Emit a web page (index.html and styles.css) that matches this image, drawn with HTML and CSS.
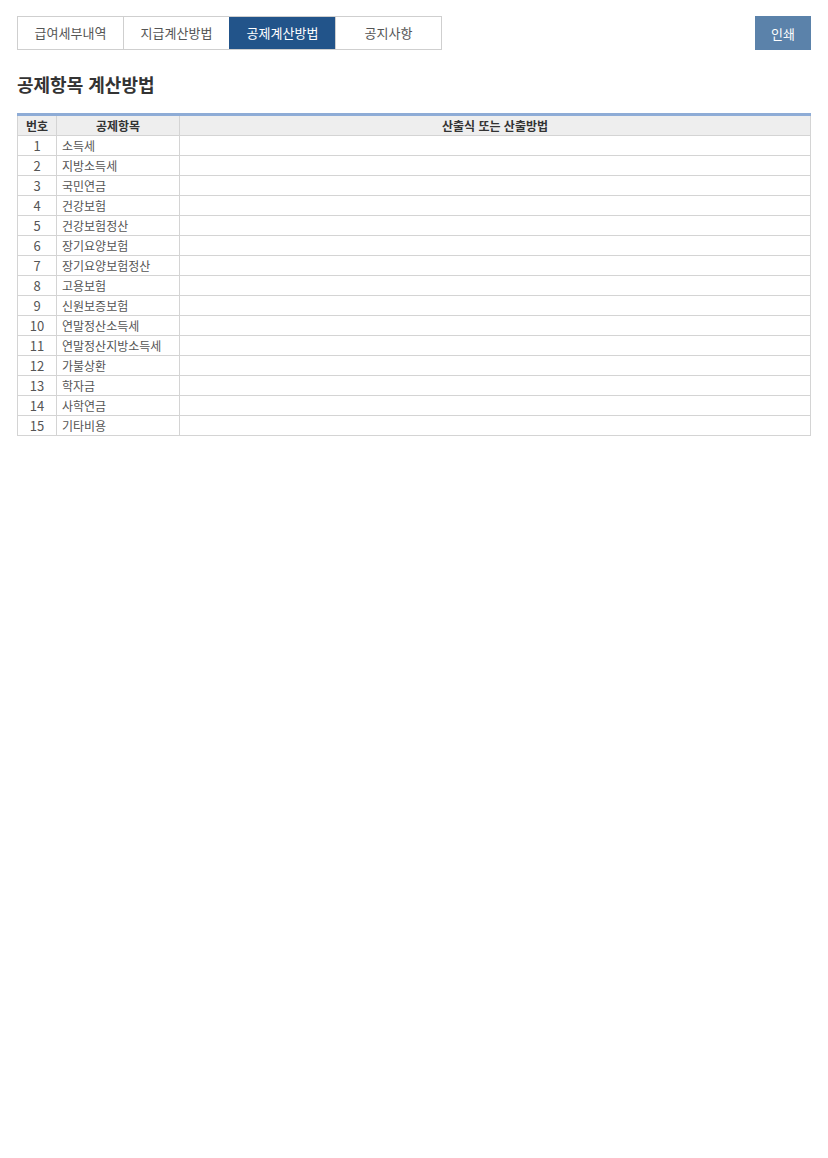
FILE: index.html
```html
<!DOCTYPE html>
<html lang="ko">
<head>
<meta charset="utf-8">
<link rel="stylesheet" href="styles.css">
</head>
<body>
<div class="page">
  <div class="topbar">
    <ul class="tabs">
      <li class="tab">급여세부내역</li>
      <li class="tab">지급계산방법</li>
      <li class="tab active">공제계산방법</li>
      <li class="tab">공지사항</li>
    </ul>
    <button class="print">인쇄</button>
  </div>
  <h2 class="title">공제항목 계산방법</h2>
  <table class="grid">
    <thead>
      <tr><th class="c-no">번호</th><th class="c-name">공제항목</th><th>산출식 또는 산출방법</th></tr>
    </thead>
    <tbody>
      <tr><td class="no">1</td><td>소득세</td><td></td></tr>
      <tr><td class="no">2</td><td>지방소득세</td><td></td></tr>
      <tr><td class="no">3</td><td>국민연금</td><td></td></tr>
      <tr><td class="no">4</td><td>건강보험</td><td></td></tr>
      <tr><td class="no">5</td><td>건강보험정산</td><td></td></tr>
      <tr><td class="no">6</td><td>장기요양보험</td><td></td></tr>
      <tr><td class="no">7</td><td>장기요양보험정산</td><td></td></tr>
      <tr><td class="no">8</td><td>고용보험</td><td></td></tr>
      <tr><td class="no">9</td><td>신원보증보험</td><td></td></tr>
      <tr><td class="no">10</td><td>연말정산소득세</td><td></td></tr>
      <tr><td class="no">11</td><td>연말정산지방소득세</td><td></td></tr>
      <tr><td class="no">12</td><td>가불상환</td><td></td></tr>
      <tr><td class="no">13</td><td>학자금</td><td></td></tr>
      <tr><td class="no">14</td><td>사학연금</td><td></td></tr>
      <tr><td class="no">15</td><td>기타비용</td><td></td></tr>
    </tbody>
  </table>
</div>
</body>
</html>
```
FILE: styles.css
```css
html, body {
  margin: 0;
  padding: 0;
  background: #fff;
}
body {
  font-family: "Noto Sans CJK KR", "Noto Sans", sans-serif;
  color: #555;
}
.page {
  padding: 16px 17px 0 17px;
}
.topbar {
  display: flex;
  justify-content: space-between;
  align-items: flex-start;
}
.tabs {
  display: flex;
  list-style: none;
  margin: 0;
  padding: 0;
  border: 1px solid #cfcfcf;
}
.tab {
  width: 105px;
  height: 32px;
  line-height: 32px;
  text-align: center;
  font-size: 13px;
  color: #555;
  border-left: 1px solid #cfcfcf;
  box-sizing: content-box;
}
.tab:first-child {
  border-left: none;
}
.tab.active {
  background: #22548a;
  color: #fff;
  border-left-color: #22548a;
}
.print {
  width: 56px;
  height: 34px;
  border: none;
  background: #5b82aa;
  color: #fff;
  font-family: inherit;
  font-size: 13px;
  padding: 0;
  cursor: pointer;
}
.title {
  margin: 20px 0 0 0;
  font-size: 18px;
  line-height: 28px;
  font-weight: bold;
  color: #333;
}
.grid {
  margin-top: 15px;
  width: 100%;
  border-collapse: collapse;
  border-top: 3px solid #8eacd6;
  font-size: 12px;
}
.grid th, .grid td {
  border: 1px solid #d4d4d4;
  height: 19px;
  line-height: 19px;
  padding: 0;
}
.grid th {
  background: #eeeeee;
  color: #333;
  font-weight: bold;
  border-top: none;
}
.c-no { width: 38px; }
.c-name { width: 122px; }
.grid td {
  color: #555;
  padding-left: 5px;
}
.grid td.no {
  text-align: center;
  padding-left: 0;
  font-size: 13px;
}
```
